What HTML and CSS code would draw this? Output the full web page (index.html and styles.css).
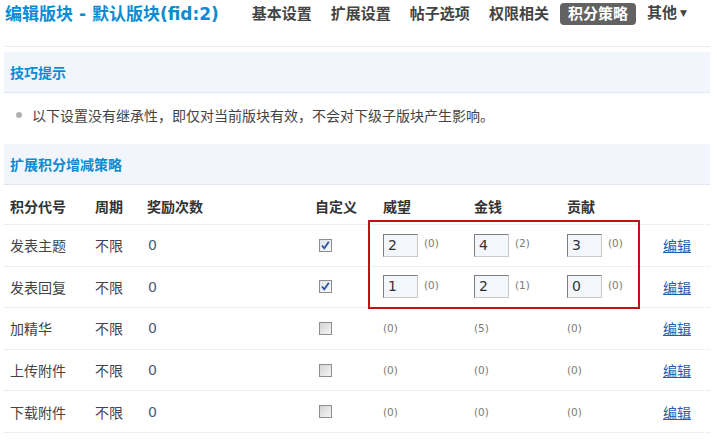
FILE: index.html
```html
<!DOCTYPE html>
<html lang="zh">
<head>
<meta charset="utf-8">
<title>编辑版块</title>
<link rel="stylesheet" href="styles.css">
</head>
<body>
<div class="page">
  <div class="header">
    <h1 class="title">编辑版块 - 默认版块(fid:2)</h1>
    <nav class="tabs">
      <span class="tab">基本设置</span>
      <span class="tab">扩展设置</span>
      <span class="tab">帖子选项</span>
      <span class="tab">权限相关</span>
      <span class="tab active">积分策略</span>
      <span class="tab">其他<span class="caret">▼</span></span>
    </nav>
  </div>
  <div class="divider"></div>

  <div class="bar">技巧提示</div>
  <div class="tip"><span class="dot"></span>以下设置没有继承性，即仅对当前版块有效，不会对下级子版块产生影响。</div>

  <div class="bar">扩展积分增减策略</div>

  <div class="table">
    <div class="row head">
      <span>积分代号</span><span>周期</span><span>奖励次数</span><span>自定义</span><span>威望</span><span>金钱</span><span>贡献</span><span></span>
    </div>
    <div class="row">
      <span>发表主题</span><span>不限</span><span class="num">0</span>
      <span><span class="cb checked"><svg viewBox="0 0 11 11" width="11" height="11"><path d="M2 5.5 L4.3 8.3 L8.8 1.8" fill="none" stroke="#2a4fa8" stroke-width="1.8"/></svg></span></span>
      <span class="cell"><span class="inp">2</span><span class="cnt">(0)</span></span>
      <span class="cell"><span class="inp">4</span><span class="cnt">(2)</span></span>
      <span class="cell"><span class="inp">3</span><span class="cnt">(0)</span></span>
      <span><a class="edit" href="#">编辑</a></span>
    </div>
    <div class="row">
      <span>发表回复</span><span>不限</span><span class="num">0</span>
      <span><span class="cb checked"><svg viewBox="0 0 11 11" width="11" height="11"><path d="M2 5.5 L4.3 8.3 L8.8 1.8" fill="none" stroke="#2a4fa8" stroke-width="1.8"/></svg></span></span>
      <span class="cell"><span class="inp">1</span><span class="cnt">(0)</span></span>
      <span class="cell"><span class="inp">2</span><span class="cnt">(1)</span></span>
      <span class="cell"><span class="inp">0</span><span class="cnt">(0)</span></span>
      <span><a class="edit" href="#">编辑</a></span>
    </div>
    <div class="row">
      <span>加精华</span><span>不限</span><span class="num">0</span>
      <span><span class="cb"></span></span>
      <span class="cnt plain">(0)</span><span class="cnt plain">(5)</span><span class="cnt plain">(0)</span>
      <span><a class="edit" href="#">编辑</a></span>
    </div>
    <div class="row">
      <span>上传附件</span><span>不限</span><span class="num">0</span>
      <span><span class="cb"></span></span>
      <span class="cnt plain">(0)</span><span class="cnt plain">(0)</span><span class="cnt plain">(0)</span>
      <span><a class="edit" href="#">编辑</a></span>
    </div>
    <div class="row">
      <span>下载附件</span><span>不限</span><span class="num">0</span>
      <span><span class="cb"></span></span>
      <span class="cnt plain">(0)</span><span class="cnt plain">(0)</span><span class="cnt plain">(0)</span>
      <span><a class="edit" href="#">编辑</a></span>
    </div>
    <div class="highlight"></div>
  </div>
</div>
</body>
</html>
```

FILE: styles.css
```css
* { box-sizing: border-box; }
html, body { margin: 0; padding: 0; background: #fff; }
body {
  font-family: "DejaVu Sans", "Noto Sans CJK SC", sans-serif;
  font-size: 14px;
  color: #333;
}
.page {
  width: 717px;
  height: 448px;
  overflow: hidden;
  padding: 0 7px 0 4px;
}
.header {
  display: flex;
  align-items: center;
  height: 28px;
}
.title {
  margin: 0;
  padding-left: 1px;
  font-size: 17px;
  font-weight: bold;
  color: #0b8bd1;
  line-height: 28px;
  white-space: nowrap;
}
.tabs {
  display: flex;
  align-items: center;
  margin-left: 25px;
}
.tab {
  font-size: 15px;
  font-weight: bold;
  color: #444;
  padding: 2px 8px;
  margin-right: 3px;
  border-radius: 4px;
  line-height: 18px;
  white-space: nowrap;
}
.tab.active {
  background: #626262;
  color: #fff;
}
.caret {
  font-size: 9px;
  margin-left: 3px;
  position: relative;
  top: -2px;
}
.divider {
  margin-top: 18px;
  height: 1px;
  background: #ebebeb;
}
.bar {
  margin-top: 5px;
  height: 41px;
  background: #f2f6fc;
  border-bottom: 1px dotted #cfdceb;
  padding-left: 6px;
  display: flex;
  align-items: center;
  font-size: 14px;
  font-weight: bold;
  color: #0b8bd1;
}
.tip {
  height: 46px;
  padding-bottom: 2px;
  display: flex;
  align-items: center;
  padding-left: 12px;
  font-size: 14px;
  color: #444;
}
.dot {
  width: 6px;
  height: 6px;
  border-radius: 50%;
  background: #b0b0b0;
  margin-right: 10px;
}
.table {
  position: relative;
}
.row {
  display: grid;
  grid-template-columns: 85px 52px 168px 68px 91px 93px 96px 1fr;
  align-items: center;
  padding-left: 6px;
  height: 41.6px;
  border-bottom: 1px dotted #d6e2ee;
  font-size: 14px;
  color: #444;
  white-space: nowrap;
}
.row.head {
  height: 40px;
  padding-top: 3px;
  font-weight: bold;
  color: #333;
}
.num {
  color: #4b5a78;
  padding-left: 1px;
}
.cb {
  display: block;
  width: 13px;
  height: 13px;
  margin-left: 4px;
  border: 1px solid #8e8e8e;
  background: linear-gradient(135deg, #d4d4d4, #f6f6f6);
}
.cb.checked {
  background: linear-gradient(135deg, #dfe3ea, #fafafa);
}
.cb svg { display: block; margin: 0; }
.cell {
  display: flex;
  align-items: center;
}
.inp {
  display: block;
  width: 35px;
  height: 23px;
  border: 1px solid #c9c9c9;
  border-top-color: #7c7c7c;
  border-left-color: #7c7c7c;
  background: #f3f7fc;
  padding-left: 4px;
  font-size: 14px;
  line-height: 21px;
  color: #333;
}
.cnt {
  font-size: 10.5px;
  color: #7d7a73;
  margin-left: 6px;
  position: relative;
  top: -2px;
}
.cnt.plain {
  margin-left: 0;
  top: 0;
}
.edit {
  color: #1f5fb0;
  text-decoration: underline;
  font-size: 14px;
}
.highlight {
  position: absolute;
  left: 364px;
  top: 35px;
  width: 272px;
  height: 89px;
  border: 2px solid #c40f14;
  pointer-events: none;
}
```
